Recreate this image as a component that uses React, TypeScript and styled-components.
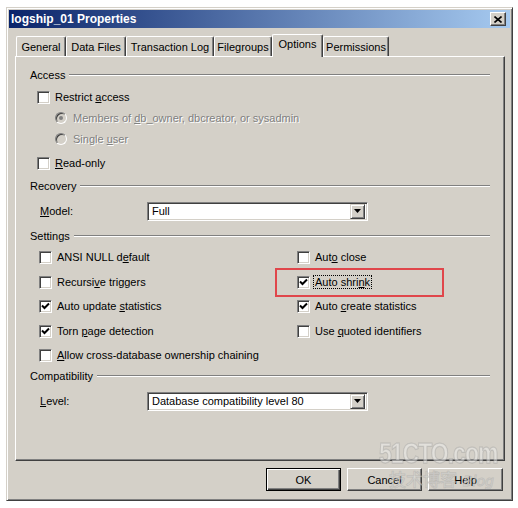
import React from "react";
import styled, { createGlobalStyle } from "styled-components";

const Global = createGlobalStyle`
  html, body { margin: 0; padding: 0; background: #fff; overflow: hidden; }
  body {
    font-family: "Liberation Sans", Arial, sans-serif;
    font-size: 11px;
    color: #000;
  }
`;

const Window = styled.div`
  position: relative;
  box-sizing: border-box;
  margin: 7px 0 0 6px;
  width: 507px;
  height: 494px;
  background: #d4d0c8;
  border: 1px solid;
  border-color: #d4d0c8 #404040 #404040 #d4d0c8;
  box-shadow: inset 1px 1px #fff, inset -1px -1px #808080;
  padding: 2px;
  display: flex;
  flex-direction: column;
`;

const TitleBar = styled.div`
  height: 18px;
  flex: 0 0 18px;
  display: flex;
  align-items: center;
  justify-content: space-between;
  padding: 0 4px 0 2px;
  background: linear-gradient(to right, #0a246a, #a6caf0);
  color: #fff;
  font-weight: bold;
  font-size: 12px;
`;

const CloseBtn = styled.div`
  box-sizing: border-box;
  width: 16px;
  height: 14px;
  background: #d4d0c8;
  border: 1px solid;
  border-color: #fff #404040 #404040 #fff;
  box-shadow: inset -1px -1px #808080;
  display: flex;
  align-items: center;
  justify-content: center;
`;

const Body = styled.div`
  padding: 6px 5px 0 6px;
  display: flex;
  flex-direction: column;
`;

const TabStrip = styled.div`
  position: relative;
  z-index: 2;
  height: 23px;
  margin-bottom: -1px;
  padding-left: 1px;
  display: flex;
  align-items: flex-end;
`;

const Tab = styled.div<{ $w: number; $active?: boolean }>`
  box-sizing: border-box;
  width: ${(p) => p.$w}px;
  height: ${(p) => (p.$active ? 23 : 20)}px;
  margin-bottom: ${(p) => (p.$active ? 0 : 1)}px;
  background: #d4d0c8;
  border-top: 1px solid #fff;
  border-left: 1px solid #fff;
  border-right: 1px solid #404040;
  border-radius: 2px 2px 0 0;
  box-shadow: inset -1px 0 #808080;
  display: flex;
  align-items: ${(p) => (p.$active ? "flex-start" : "center")};
  padding-top: ${(p) => (p.$active ? 3 : 0)}px;
  justify-content: center;
  white-space: nowrap;
`;

const Panel = styled.div`
  position: relative;
  z-index: 1;
  box-sizing: border-box;
  height: 405px;
  background: #d4d0c8;
  border: 1px solid;
  border-color: #fff #404040 #404040 #fff;
  box-shadow: inset -1px -1px #808080;
  padding: 8px 14px 0 14px;
  display: flex;
  flex-direction: column;
`;

const Row = styled.div<{ $mt?: number; $indent?: number }>`
  height: 20px;
  margin-top: ${(p) => p.$mt ?? 0}px;
  padding-left: ${(p) => p.$indent ?? 0}px;
  display: flex;
  align-items: center;
  white-space: nowrap;
`;

const Rule = styled.div`
  flex: 1;
  height: 0;
  margin-left: 4px;
  border-top: 1px solid #808080;
  border-bottom: 1px solid #fff;
`;

const Acc = styled.span`
  text-decoration: underline;
`;

const Box = styled.span`
  box-sizing: border-box;
  flex: 0 0 13px;
  width: 13px;
  height: 13px;
  background: #fff;
  border: 1px solid;
  border-color: #808080 #fff #fff #808080;
  box-shadow: inset 1px 1px #404040, inset -1px -1px #d4d0c8;
  margin-right: 5px;
  display: flex;
  align-items: center;
  justify-content: center;
`;

const Radio = styled.span`
  box-sizing: border-box;
  flex: 0 0 12px;
  width: 12px;
  height: 12px;
  border-radius: 50%;
  background: #d4d0c8;
  border: 1px solid;
  border-color: #808080 #fff #fff #808080;
  box-shadow: inset 1px 1px #404040;
  margin-right: 6px;
  display: flex;
  align-items: center;
  justify-content: center;
`;

const Dot = styled.span`
  width: 4px;
  height: 4px;
  border-radius: 50%;
  background: #808080;
`;

const Disabled = styled.span`
  color: #808080;
  text-shadow: 1px 1px 0 #fff;
`;

const FieldLabel = styled.span`
  width: 107px;
`;

const Combo = styled.div`
  box-sizing: border-box;
  width: 221px;
  height: 19px;
  background: #fff;
  border: 1px solid;
  border-color: #808080 #fff #fff #808080;
  box-shadow: inset 1px 1px #404040, inset -1px -1px #d4d0c8;
  padding: 2px 2px 2px 4px;
  display: flex;
  align-items: center;
  justify-content: space-between;
`;

const ComboBtn = styled.span`
  box-sizing: border-box;
  width: 15px;
  height: 15px;
  background: #d4d0c8;
  border: 1px solid;
  border-color: #d4d0c8 #404040 #404040 #d4d0c8;
  box-shadow: inset 1px 1px #fff, inset -1px -1px #808080;
  display: flex;
  align-items: center;
  justify-content: center;
`;

const SettingsGrid = styled.div`
  margin-top: 1px;
  padding-left: 9px;
  display: grid;
  grid-template-columns: 258px 1fr;
  grid-template-rows: 25px 24px 25px 24px 20px;
`;

const Cell = styled.div`
  position: relative;
  height: 20px;
  display: flex;
  align-items: center;
  white-space: nowrap;
`;

const Focus = styled.span`
  outline: 1px dotted #000;
  outline-offset: 0;
  padding: 0 1px;
  margin-left: -1px;
`;

const Highlight = styled.div`
  position: absolute;
  left: -22px;
  top: -4px;
  width: 169px;
  height: 29px;
  box-sizing: border-box;
  border: 2px solid #e0464b;
  pointer-events: none;
`;

const ButtonRow = styled.div`
  margin-top: 7px;
  padding-right: 2px;
  display: flex;
  justify-content: flex-end;
  gap: 6px;
`;

const Button = styled.div<{ $default?: boolean }>`
  box-sizing: border-box;
  width: 75px;
  height: 23px;
  background: #d4d0c8;
  border: 1px solid;
  border-color: ${(p) => (p.$default ? "#000" : "#fff #404040 #404040 #fff")};
  box-shadow: ${(p) =>
    p.$default
      ? "inset 1px 1px #fff, inset -1px -1px #404040, inset -2px -2px #808080"
      : "inset -1px -1px #808080"};
  display: flex;
  align-items: center;
  justify-content: center;
`;

const Watermark = styled.div`
  position: absolute;
  z-index: 5;
  left: 372px;
  top: 431px;
  width: 130px;
  pointer-events: none;
  color: rgba(240, 240, 238, 0.5);
  -webkit-text-stroke: 1px rgba(140, 140, 140, 0.32);
  line-height: 1;
`;

const WmBig = styled.div`
  font-family: "Liberation Sans", Arial, sans-serif;
  font-weight: bold;
  font-size: 23px;
  letter-spacing: -1px;
  white-space: nowrap;
  transform: scaleY(1.25);
  transform-origin: top;
`;

const WmSmall = styled.div`
  margin-top: 8px;
  margin-left: 10px;
  font-family: "Noto Sans CJK SC", sans-serif;
  font-size: 17px;
  display: flex;
  gap: 6px;
  align-items: baseline;
  white-space: nowrap;
`;

const WmBlog = styled.span`
  font-family: "DejaVu Sans", sans-serif;
  font-style: italic;
  font-size: 14px;
`;

const Check = () => (
  <svg width="9" height="9" viewBox="0 0 9 9">
    <path d="M1 3.5 L3.5 6 L8 1.5" fill="none" stroke="#000" strokeWidth="2" />
  </svg>
);

const CheckBox = ({ checked }: { checked?: boolean }) => <Box>{checked ? <Check /> : null}</Box>;

const Arrow = () => (
  <svg width="7" height="4" viewBox="0 0 7 4">
    <path d="M0 0 H7 L3.5 4 Z" fill="#000" />
  </svg>
);

const tabs: { label: string; w: number; active?: boolean }[] = [
  { label: "General", w: 50 },
  { label: "Data Files", w: 60 },
  { label: "Transaction Log", w: 88 },
  { label: "Filegroups", w: 58 },
  { label: "Options", w: 51, active: true },
  { label: "Permissions", w: 66 },
];

export default function App() {
  return (
    <>
      <Global />
      <Window>
        <TitleBar>
          <span>logship_01 Properties</span>
          <CloseBtn>
            <svg width="8" height="7" viewBox="0 0 8 7">
              <path d="M0.5 0.5 L7.5 6.5 M7.5 0.5 L0.5 6.5" stroke="#000" strokeWidth="1.6" />
            </svg>
          </CloseBtn>
        </TitleBar>
        <Body>
          <TabStrip>
            {tabs.map((t) => (
              <Tab key={t.label} $w={t.w} $active={t.active}>
                {t.label}
              </Tab>
            ))}
          </TabStrip>
          <Panel>
            <Row>
              <span>Access</span>
              <Rule />
            </Row>
            <Row $mt={2} $indent={7}>
              <CheckBox />
              <span>
                Restrict <Acc>a</Acc>ccess
              </span>
            </Row>
            <Row $mt={1} $indent={25}>
              <Radio>
                <Dot />
              </Radio>
              <Disabled>
                Members of <Acc>d</Acc>b_owner, dbcreator, or sysadmin
              </Disabled>
            </Row>
            <Row $mt={1} $indent={25}>
              <Radio />
              <Disabled>
                Single <Acc>u</Acc>ser
              </Disabled>
            </Row>
            <Row $mt={4} $indent={7}>
              <CheckBox />
              <span>
                <Acc>R</Acc>ead-only
              </span>
            </Row>
            <Row $mt={3}>
              <span>Recovery</span>
              <Rule />
            </Row>
            <Row $mt={5} $indent={10}>
              <FieldLabel>
                <Acc>M</Acc>odel:
              </FieldLabel>
              <Combo>
                <span>Full</span>
                <ComboBtn>
                  <Arrow />
                </ComboBtn>
              </Combo>
            </Row>
            <Row $mt={5}>
              <span>Settings</span>
              <Rule />
            </Row>
            <SettingsGrid>
              <Cell>
                <CheckBox />
                <span>
                  ANSI NULL d<Acc>e</Acc>fault
                </span>
              </Cell>
              <Cell>
                <CheckBox />
                <span>
                  Aut<Acc>o</Acc> close
                </span>
              </Cell>
              <Cell>
                <CheckBox />
                <span>
                  Recursi<Acc>v</Acc>e triggers
                </span>
              </Cell>
              <Cell>
                <Highlight />
                <CheckBox checked />
                <Focus>
                  Auto shri<Acc>n</Acc>k
                </Focus>
              </Cell>
              <Cell>
                <CheckBox checked />
                <span>
                  Auto update <Acc>s</Acc>tatistics
                </span>
              </Cell>
              <Cell>
                <CheckBox checked />
                <span>
                  Auto <Acc>c</Acc>reate statistics
                </span>
              </Cell>
              <Cell>
                <CheckBox checked />
                <span>
                  Torn <Acc>p</Acc>age detection
                </span>
              </Cell>
              <Cell>
                <CheckBox />
                <span>
                  Use <Acc>q</Acc>uoted identifiers
                </span>
              </Cell>
              <Cell>
                <CheckBox />
                <span>
                  <Acc>A</Acc>llow cross-database ownership chaining
                </span>
              </Cell>
            </SettingsGrid>
            <Row $mt={1}>
              <span>Compatibility</span>
              <Rule />
            </Row>
            <Row $mt={5} $indent={10}>
              <FieldLabel>
                <Acc>L</Acc>evel:
              </FieldLabel>
              <Combo>
                <span>Database compatibility level 80</span>
                <ComboBtn>
                  <Arrow />
                </ComboBtn>
              </Combo>
            </Row>
          </Panel>
          <ButtonRow>
            <Button $default>OK</Button>
            <Button>Cancel</Button>
            <Button>Help</Button>
          </ButtonRow>
        </Body>
        <Watermark>
          <WmBig>51CTO.com</WmBig>
          <WmSmall>
            <span>技术博客</span>
            <WmBlog>Blog</WmBlog>
          </WmSmall>
        </Watermark>
      </Window>
    </>
  );
}
